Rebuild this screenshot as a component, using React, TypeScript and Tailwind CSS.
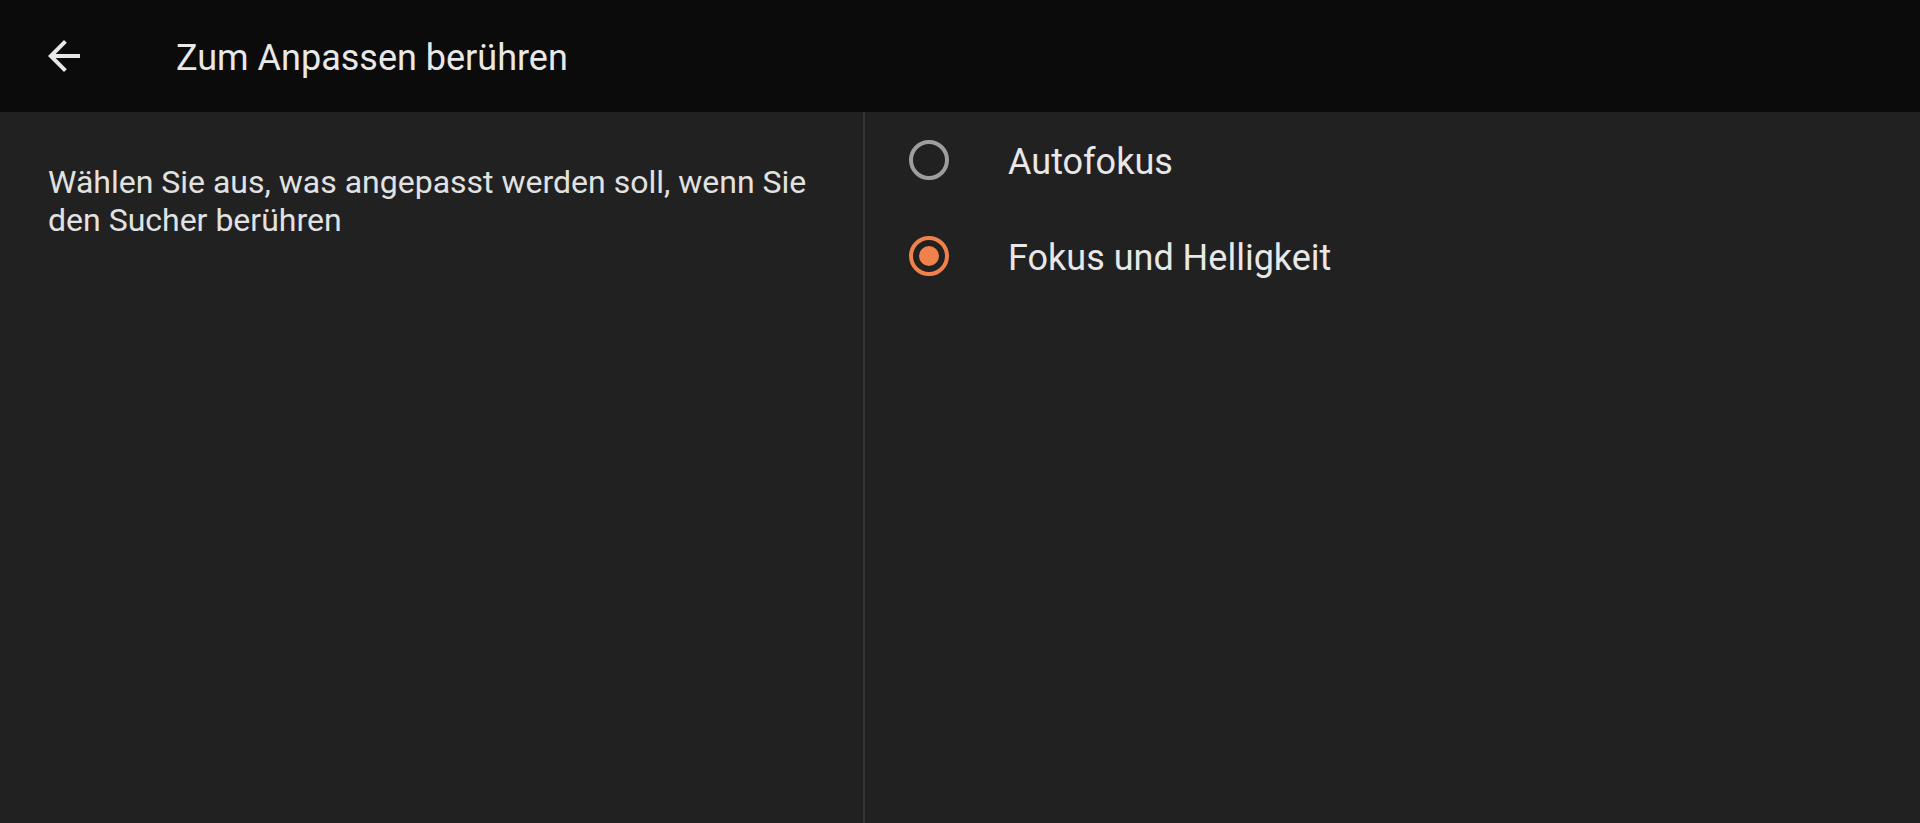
import { useState } from "react";

const font = { fontFamily: "Roboto, 'Noto Sans', sans-serif" };

function BackArrow() {
  return (
    <svg width="48" height="48" viewBox="0 0 24 24" fill="#e8e8e8">
      <path d="M20 11H7.83l5.59-5.59L12 4l-8 8 8 8 1.41-1.41L7.83 13H20v-2z" />
    </svg>
  );
}

function Radio({ checked }: { checked: boolean }) {
  return (
    <svg width="48" height="48" viewBox="0 0 24 24">
      <circle
        cx="12"
        cy="12"
        r="9"
        fill="none"
        stroke={checked ? "#f0814b" : "#9e9e9e"}
        strokeWidth="2"
      />
      {checked && <circle cx="12" cy="12" r="5" fill="#f0814b" />}
    </svg>
  );
}

const options = ["Autofokus", "Fokus und Helligkeit"];

export default function App() {
  const [selected, setSelected] = useState(1);

  return (
    <div className="flex h-[823px] w-full flex-col bg-[#212121] text-[#e6e6e6]" style={font}>
      {/* ── Toolbar ── */}
      <div className="flex h-[112px] shrink-0 items-center bg-[#0b0b0b] pl-10">
        <button type="button" className="flex h-12 w-12 items-center justify-center">
          <BackArrow />
        </button>
        <h1 className="ml-[88px] mt-[3px] text-[36px] leading-none font-normal text-[#e8e8e8]">
          Zum Anpassen berühren
        </h1>
      </div>

      {/* ── Content ── */}
      <div className="flex min-h-0 flex-1">
        <div className="w-[865px] shrink-0 border-r-2 border-[#333333] pl-12 pr-10 pt-[51px]">
          <p className="text-[32px] leading-[38px] text-[#e2e2e2]">
            Wählen Sie aus, was angepasst werden soll, wenn Sie den Sucher berühren
          </p>
        </div>

        <div className="flex flex-1 flex-col pl-10">
          {options.map((label, i) => (
            <button
              type="button"
              key={label}
              onClick={() => setSelected(i)}
              className="flex h-24 items-center text-left"
            >
              <Radio checked={selected === i} />
              <span className="ml-[55px] mt-[3px] text-[36px] leading-none text-[#e8e8e8]">
                {label}
              </span>
            </button>
          ))}
        </div>
      </div>
    </div>
  );
}
